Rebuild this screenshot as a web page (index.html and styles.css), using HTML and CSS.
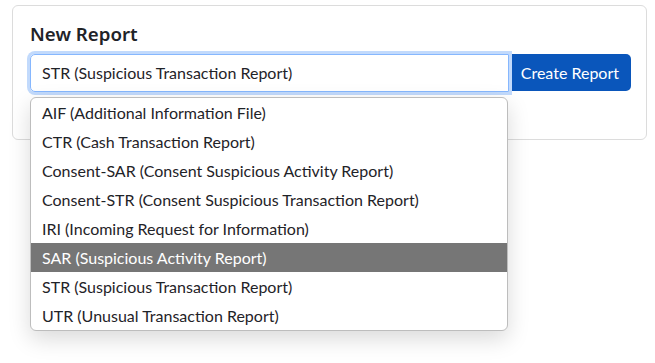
FILE: index.html
```html
<!DOCTYPE html>
<html lang="en">
<head>
    <meta charset="UTF-8">
    <meta name="viewport" content="width=device-width, initial-scale=1.0">
    <title>New Report</title>
    <link rel="stylesheet" href="styles.css">
</head>
<body>

    <div class="card">
        <h2 class="card-title">New Report</h2>

        <div class="report-form">
            <div class="picker">
                <div class="picker-input">STR (Suspicious Transaction Report)</div>

                <ul class="picker-list">
                    <li>AIF (Additional Information File)</li>
                    <li>CTR (Cash Transaction Report)</li>
                    <li>Consent-SAR (Consent Suspicious Activity Report)</li>
                    <li>Consent-STR (Consent Suspicious Transaction Report)</li>
                    <li>IRI (Incoming Request for Information)</li>
                    <li class="active">SAR (Suspicious Activity Report)</li>
                    <li>STR (Suspicious Transaction Report)</li>
                    <li>UTR (Unusual Transaction Report)</li>
                </ul>
            </div>
            <button class="create">Create Report</button>
        </div>
    </div>

</body>
</html>
```

FILE: styles.css
```css
/* Basic styling */
* {
    box-sizing: border-box;
}

html,
body {
    height: 100%;
}

body {
    font-family: Lato, "Noto Sans", Arial, sans-serif;
    background-color: #ffffff;
    color: #1f2328;
    margin: 0;
    padding: 5px 8px 0 12px;
}

.card {
    border: 1px solid #dcdcdc;
    border-radius: 6px;
    height: 135px;
    padding: 14px 15px 0 17px;
}

.card-title {
    font-family: "Noto Sans", Arial, sans-serif;
    font-size: 18.7px;
    font-weight: 600;
    margin: 0 0 6px 0;
    line-height: 28px;
}

.report-form {
    display: flex;
}

.picker {
    position: relative;
    width: 479px;
}

.picker-input {
    height: 38px;
    border: 1px solid #86b7fe;
    border-radius: 5px 0 0 5px;
    box-shadow: 0 0 0 3px #c2dafc;
    padding: 0 11px;
    font-size: 16px;
    line-height: 36px;
}

.picker-list {
    position: absolute;
    top: 43px;
    left: 0;
    width: 478px;
    margin: 0;
    padding: 0;
    list-style: none;
    background-color: #ffffff;
    border: 1px solid #bdbdbd;
    border-radius: 6px;
    box-shadow: 0 8px 22px rgba(0, 0, 0, 0.15);
    overflow: hidden;
    z-index: 2;
}

.picker-list li {
    height: 29px;
    line-height: 29px;
    padding: 0 11px;
    font-size: 16px;
}

.picker-list li.active {
    background-color: #767676;
    color: #ffffff;
}

.create {
    height: 37px;
    padding: 0 12px;
    background-color: #0a56bb;
    border: none;
    border-radius: 0 5px 5px 0;
    color: #ffffff;
    font-family: inherit;
    font-size: 16px;
    white-space: nowrap;
    cursor: pointer;
}

.create:hover {
    background-color: #0a4fa8;
}
```
